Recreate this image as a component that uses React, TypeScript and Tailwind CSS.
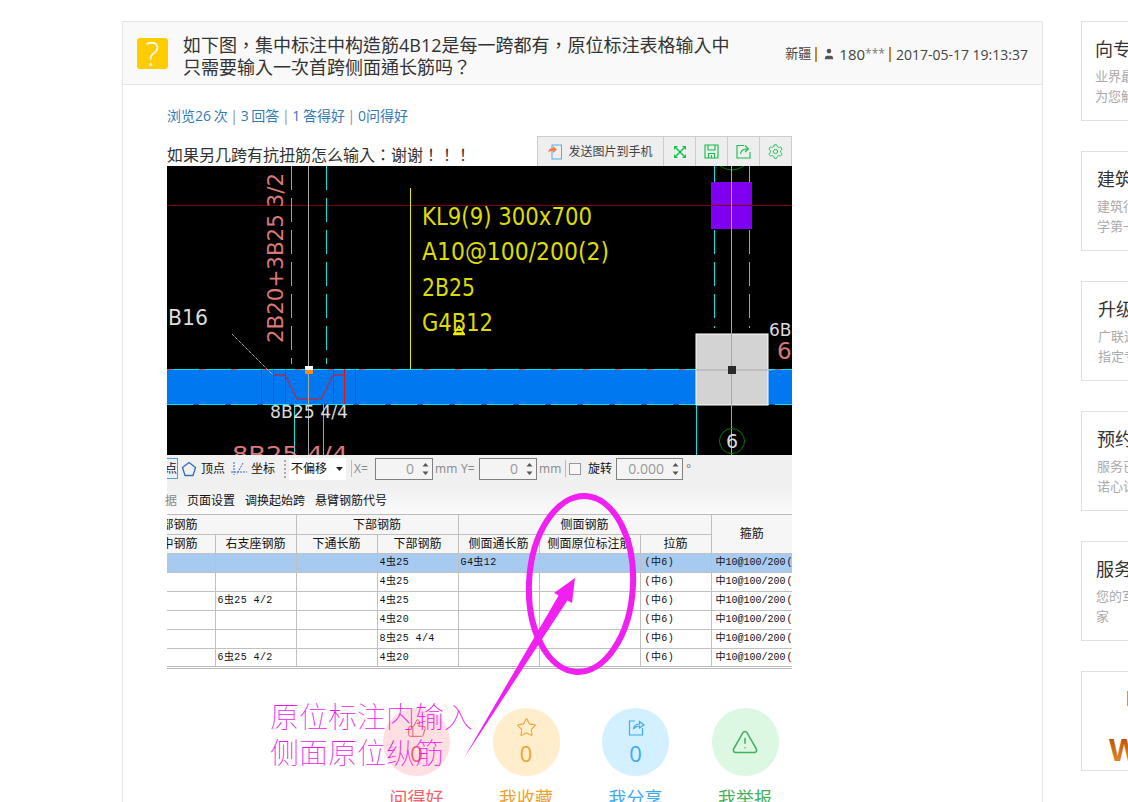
import React from 'react';
import { Settings, Star, ThumbsUp, TriangleAlert, User } from 'lucide-react';

const sideCards = [
  { title: '向专家提问', lines: ['业界最权威的专家', '为您解答疑难问题'], pad: 'pl-[13px]' },
  { title: '建筑课堂', lines: ['建筑行业在线学习', '学第一手专业知识'], pad: 'pl-[15px]' },
  { title: '升级服务', lines: ['广联达服务新升级', '指定专家一对一'], pad: 'pl-[16px]' },
  { title: '预约服务', lines: ['服务已全面升级', '诺心试用新体验'], pad: 'pl-[15px]' },
  { title: '服务热线', lines: ['您的军师智囊专', '家'], pad: 'pl-[14px]' },
];

const rows = [
  { right: '', bottom: '4虫25', side: 'G4虫12', active: true },
  { right: '', bottom: '4虫25', side: '' },
  { right: '6虫25 4/2', bottom: '4虫25', side: '' },
  { right: '', bottom: '4虫20', side: '' },
  { right: '', bottom: '8虫25 4/4', side: '' },
  { right: '6虫25 4/2', bottom: '4虫20', side: '' },
];

const actions = [
  { label: '问得好', count: '0', circle: 'bg-[#ffdfe1]', text: 'text-[#f0606a]', icon: <ThumbsUp size={20} strokeWidth={1.2} /> },
  { label: '我收藏', count: '0', circle: 'bg-[#ffedcb]', text: 'text-[#eba42f]', icon: <Star size={21} strokeWidth={1.2} /> },
  {
    label: '我分享',
    count: '0',
    circle: 'bg-[#d2f0ff]',
    text: 'text-[#3fa9f0]',
    icon: (
      <svg width="20" height="20" viewBox="0 0 20 20" fill="none" stroke="currentColor" strokeWidth="1.2">
        <path d="M9 3H3.500v14h13v-7" />
        <path d="M7.500 11c.5-3.500 3-5 6-5V3.500L18 7l-4.500 3V8c-2.500 0-4.500 1-6 3z" />
      </svg>
    ),
  },
  { label: '我举报', count: '', circle: 'bg-[#dcf7e2]', text: 'text-[#45b060]', icon: <TriangleAlert size={28} strokeWidth={1.3} /> },
];

const Spin = () => (
  <svg width="7" height="14" viewBox="0 0 7 14" className="fill-[#555]">
    <path d="M3.500 1 6.500 4.500h-6zM3.500 13 .5 9.500h6z" />
  </svg>
);

const NumBox = ({ value, width }: { value: string; width: string }) => (
  <div className={`${width} h-[22px] border border-[#808080] bg-[#f4f4f4] flex items-center justify-end gap-[8px] pr-[3px] text-[14px] text-[#999]`}>
    <span>{value}</span>
    <Spin />
  </div>
);

const ToolBtn = ({ children }: { children: React.ReactNode }) => (
  <div className="w-[32px] h-full flex items-center justify-center border-l border-[#ccc]">{children}</div>
);

const CadDrawing = () => (
  <svg width="625" height="289" viewBox="0 0 625 289" className="block bg-black font-['DejaVu_Sans',sans-serif]">
    <rect x="0" y="203" width="625" height="35" fill="#0078f0" />
    <line x1="0" y1="39.500" x2="625" y2="39.500" stroke="#800000" />
    <line x1="124.500" y1="0" x2="124.500" y2="198" stroke="#00e8e8" strokeWidth="1" strokeDasharray="24 8" />
    <line x1="159.500" y1="0" x2="159.500" y2="198" stroke="#00e8e8" strokeWidth="1" strokeDasharray="24 8" />
    <line x1="547.500" y1="0" x2="547.500" y2="162" stroke="#00e8e8" strokeDasharray="24 8" />
    <line x1="582.500" y1="0" x2="582.500" y2="162" stroke="#00e8e8" strokeDasharray="24 8" />
    <line x1="243.500" y1="22" x2="243.500" y2="203" stroke="#e8e800" />
    <rect x="544" y="16" width="41" height="47" fill="#7f00f0" />
    <line x1="544" y1="39.500" x2="585" y2="39.500" stroke="#800000" />
    <path d="M553 0q12 8 24 0" fill="none" stroke="#008000" />

    <line x1="0" y1="203.500" x2="625" y2="203.500" stroke="#00e8e8" />
    <line x1="0" y1="203.500" x2="625" y2="203.500" stroke="#b06060" strokeDasharray="6 26" />
    <line x1="0" y1="238.500" x2="625" y2="238.500" stroke="#0058b0" />
    <line x1="0" y1="238.500" x2="625" y2="238.500" stroke="#00e8e8" strokeDasharray="26 6" />
    <line x1="65" y1="168" x2="106" y2="209" stroke="#fff" strokeDasharray="1 1" />
    <g stroke="#f01010" fill="none">
      <path d="M94.500 203v35M106.500 203v35M118.500 203v35M166.500 203v35M177.500 203v35M188.500 203v35" />
      <path d="M106 209h12l12 24h24l12-24h11" />
    </g>

    <rect x="529" y="168" width="72" height="71" fill="#d3d3d3" stroke="#fff" />
    <line x1="529" y1="204" x2="605" y2="204" stroke="#a8a8a8" />
    <line x1="141.500" y1="0" x2="141.500" y2="289" stroke="#a8a8a8" />
    <line x1="564.500" y1="0" x2="564.500" y2="289" stroke="#a8a8a8" />
    <rect x="561" y="200" width="8" height="8" fill="#2a2a2a" />
    <rect x="138" y="200" width="8" height="4" fill="#fff" />
    <rect x="138" y="204" width="8" height="4" fill="#f58a1f" />

    <line x1="127.500" y1="238" x2="127.500" y2="289" stroke="#00e8e8" />
    <line x1="156.500" y1="238" x2="156.500" y2="289" stroke="#00e8e8" />
    <line x1="529.500" y1="239" x2="529.500" y2="289" stroke="#00e8e8" />
    <line x1="564.500" y1="239" x2="564.500" y2="262" stroke="#00e8e8" />
    <circle cx="565" cy="275" r="12.500" fill="none" stroke="#008000" />

    <text x="0" y="0" transform="translate(116 177) rotate(-90)" fontSize="22" fill="#d97878" textLength="170" lengthAdjust="spacingAndGlyphs">2B20+3B25 3/2</text>
    <text x="1" y="159" fontSize="22" fill="#dcdcdc" textLength="40" lengthAdjust="spacingAndGlyphs">B16</text>
    <text x="103" y="252" fontSize="18" fill="#dcdcdc" textLength="78" lengthAdjust="spacingAndGlyphs">8B25 4/4</text>
    <text x="65" y="296" fontSize="22" fill="#d97878" textLength="116" lengthAdjust="spacingAndGlyphs">8B25 4/4</text>
    <text x="255" y="59" fontSize="24" fill="#dcdc00" textLength="170" lengthAdjust="spacingAndGlyphs">KL9(9) 300x700</text>
    <text x="255" y="94" fontSize="24" fill="#dcdc00" textLength="187" lengthAdjust="spacingAndGlyphs">A10@100/200(2)</text>
    <text x="255" y="130" fontSize="24" fill="#dcdc00" textLength="53" lengthAdjust="spacingAndGlyphs">2B25</text>
    <text x="255" y="165" fontSize="24" fill="#dcdc00" textLength="71" lengthAdjust="spacingAndGlyphs">G4B12</text>
    <path d="M292 160l-4.500 7h9zM286 168.500h12" fill="none" stroke="#f0f000" strokeWidth="1.500" />
    <text x="602" y="170" fontSize="17" fill="#dcdcdc">6B</text>
    <text x="610" y="193" fontSize="23" fill="#d97878">6</text>
    <text x="565" y="282" fontSize="19" fill="#dcdcdc" textAnchor="middle">6</text>
  </svg>
);

const CadToolbar = () => (
  <div className="h-[33px] bg-[#f0f0f0] flex items-start pt-[3px] whitespace-nowrap text-[12px] leading-[22px] text-[#111] overflow-hidden">
    <div className="w-[11px] h-[21px] border border-l-0 border-[#5b9bd5] bg-[#e8f2fb] flex items-center justify-end overflow-hidden text-[12px]">点</div>
    <svg width="16" height="16" viewBox="0 0 16 16" className="ml-[3px] mt-[3px] fill-none stroke-[#2f6fc0]" strokeWidth="1.300">
      <path d="M8 1.500 14.500 6.500 12 14.500H4L1.500 6.500z" />
    </svg>
    <span className="ml-[4px]">顶点</span>
    <svg width="18" height="16" viewBox="0 0 18 16" className="ml-[5px] mt-[3px] fill-none stroke-[#2f6fc0]" strokeDasharray="2 1">
      <path d="M4 1v13M1 11h16M13 2 7 13" />
    </svg>
    <span className="ml-[3px]">坐标</span>
    <div className="ml-[9px] mt-[2px] w-[2px] h-[18px] border-l-2 border-dotted border-[#aaa]" />
    <div className="ml-[3px] w-[57px] h-[22px] bg-white flex items-center justify-between pl-[2px] pr-[3px]">
      <span>不偏移</span>
      <svg width="7" height="4" viewBox="0 0 7 4" className="fill-[#222]"><path d="M0 0h7L3.500 4z" /></svg>
    </div>
    <div className="ml-[5px] mt-[2px] w-px h-[17px] bg-[#bbb]" />
    <span className="ml-[2px] w-[21px] text-[#888]">X=</span>
    <NumBox value="0" width="w-[58px]" />
    <span className="ml-[2px] w-[26px] text-[#888]">mm</span>
    <span className="w-[18px] text-[#888]">Y=</span>
    <NumBox value="0" width="w-[58px]" />
    <span className="ml-[2px] w-[26px] text-[#888]">mm</span>
    <div className="mt-[2px] w-px h-[17px] bg-[#bbb]" />
    <div className="ml-[3px] mt-[5px] w-[12px] h-[12px] border border-[#999] bg-[#f6f6f6]" />
    <span className="ml-[7px]">旋转</span>
    <div className="ml-[4px]"><NumBox value="0.000" width="w-[67px]" /></div>
    <span className="ml-[3px] text-[#777]">°</span>
  </div>
);

const BarTable = () => (
  <table className="w-[625px] table-fixed border-collapse text-[12px] leading-none text-[#111] border-b-[3px] border-double border-[#bbb]">
    <colgroup>
      <col className="w-[48px]" />
      <col className="w-[81px]" />
      <col className="w-[81px]" />
      <col className="w-[81px]" />
      <col className="w-[81px]" />
      <col className="w-[101px]" />
      <col className="w-[71px]" />
      <col className="w-[81px]" />
    </colgroup>
    <thead>
      <tr className="h-[19px] bg-[#f6f6f6]">
        <th colSpan={2} className="border-r border-b border-[#c0c0c0] font-normal p-0 pt-px overflow-hidden">
          <div className="flex justify-end pr-[98px] whitespace-nowrap">上部钢筋</div>
        </th>
        <th colSpan={2} className="border-x border-b border-[#c0c0c0] font-normal p-0 pt-px">下部钢筋</th>
        <th colSpan={3} className="border-x border-b border-[#c0c0c0] font-normal p-0 pt-px">侧面钢筋</th>
        <th rowSpan={2} className="border-l border-b border-[#c0c0c0] font-normal p-0">箍筋</th>
      </tr>
      <tr className="h-[19px] bg-[#f6f6f6]">
        <th className="border-r border-b border-[#c0c0c0] font-normal p-0 pt-px overflow-hidden">
          <div className="flex justify-end pr-[17px] whitespace-nowrap">跨中钢筋</div>
        </th>
        {['右支座钢筋', '下通长筋', '下部钢筋', '侧面通长筋', '侧面原位标注筋', '拉筋'].map((h) => (
          <th key={h} className="border-x border-b border-[#c0c0c0] font-normal p-0 pt-px whitespace-nowrap overflow-hidden">{h}</th>
        ))}
      </tr>
    </thead>
    <tbody className="font-['Liberation_Mono','Noto_Sans_CJK_SC',monospace] text-[10px] tracking-[0.4px]">
      {rows.map((r, i) => (
        <tr key={i} className={`h-[19px] ${r.active ? 'bg-[#a6caf0]' : 'bg-white'}`}>
          <td className="border-r border-b border-[#c0c0c0] p-0" />
          <td className="border-x border-b border-[#c0c0c0] pl-[2px] pr-0 py-0 pt-px whitespace-pre">{r.right}</td>
          <td className="border-x border-b border-[#c0c0c0] p-0" />
          <td className="border-x border-b border-[#c0c0c0] pl-[2px] pr-0 py-0 pt-px whitespace-pre">{r.bottom}</td>
          <td className="border-x border-b border-[#c0c0c0] pl-[2px] pr-0 py-0 pt-px whitespace-pre">{r.side}</td>
          <td className="border-x border-b border-[#c0c0c0] p-0" />
          <td className="border-x border-b border-[#c0c0c0] pl-[4px] pr-0 py-0 pt-px whitespace-pre">(中6)</td>
          <td className="border-l border-b border-[#c0c0c0] pl-[4px] pr-0 py-0 pt-px whitespace-nowrap overflow-hidden tracking-normal">
            中10@100/200<span className="ml-px">(2)</span>
          </td>
        </tr>
      ))}
    </tbody>
  </table>
);

const Annotation = () => (
  <>
    <svg width="130" height="280" viewBox="0 0 130 280" className="absolute left-[290px] top-[325px] overflow-visible pointer-events-none">
      {/* ellipse and arrow drawn over the table */}
      <ellipse cx="124" cy="93" rx="52" ry="88" fill="none" stroke="#f020f0" strokeWidth="6" transform="rotate(3 124 93)" />
      <polygon points="118,87 115,112 110.400,109.400 7,267 101.600,104.600 97,102" fill="#f020f0" />
    </svg>
    <div className="absolute left-[103px] top-[533px] text-[29px] leading-[36px] font-thin text-[#ee14ee] whitespace-nowrap pointer-events-none">
      <div>原位标注内输入</div>
      <div>侧面原位纵筋</div>
    </div>
  </>
);

export default function App() {
  return (
    <div className="relative w-[1128px] h-[802px] overflow-hidden bg-white flex items-start gap-[38px] pl-[122px] pt-[21px] font-['Open_Sans','Noto_Sans_CJK_SC',sans-serif] text-[#333]">
      <main className="w-[921px] h-[900px] shrink-0 border border-[#e5e5e5]">
        <header className="h-[63px] bg-[#f9f9f9] border-b border-[#e5e5e5] flex items-center pl-[14px] pr-[14px]">
          <div className="w-[31px] h-[31px] rounded-[3px] bg-[#ffcc00] text-white text-[33px] font-light leading-[31px] text-center shrink-0">?</div>
          <h1 className="ml-[15px] mt-[5px] w-[560px] text-[18px] leading-[22px] font-normal text-[#333] font-['Open_Sans','Noto_Sans_CJK_TC',sans-serif]">
            如下图，集中标注中构造筋4B12是每一跨都有，原位标注表格输入中只需要输入一次首跨侧面通长筋吗？
          </h1>
          <div className="ml-auto mt-[2px] flex items-center whitespace-nowrap text-[14px] text-[#444]">
            <span className="text-[13px]">新疆</span>
            <span className="ml-[4px] w-[2px] h-[15px] bg-[#c8883a]" />
            <User size={14} strokeWidth={0} className="ml-[5px] fill-[#555]" />
            <span className="ml-[3px] text-[15px]">180</span>
            <span className="text-[12px] text-[#777]">***</span>
            <span className="ml-[4px] mr-[5px] w-[2px] h-[15px] bg-[#c8883a]" />
            <span>2017-05-17 19:13:37</span>
          </div>
        </header>

        <section className="pl-[44px] pt-[21px]">
          <p className="h-[20px] text-[14px] leading-[20px] text-[#337ab7] whitespace-pre [word-spacing:-1px]">
            浏览26 次 <span className="text-[#8a8ab0]">|</span> 3 回答 <span className="text-[#8a8ab0]">|</span> 1 答得好 <span className="text-[#8a8ab0]">|</span> 0问得好
          </p>
          <p className="mt-[19px] h-[21px] text-[16px] leading-[20px] whitespace-nowrap font-['Open_Sans','Noto_Sans_CJK_TC',sans-serif]">如果另几跨有抗扭筋怎么输入：谢谢！！！</p>

          <div className="relative w-[625px]">
            <div className="absolute right-0 top-[-30px] h-[30px] flex items-center bg-[#eeeeee] border border-[#ccc] border-b-0 text-[12px] text-[#444]">
              <div className="w-[125px] h-full flex items-center justify-center gap-[6px]">
                <svg width="14" height="16" viewBox="0 0 14 16" fill="none">
                  <rect x="4" y="1" width="9.500" height="14" stroke="#4fb0f0" />
                  <path d="M0 8q1-4 5-4V2l4 3.500L5 9V7q-3 0-5 1z" fill="#f97b45" />
                </svg>
                <span>发送图片到手机</span>
              </div>
              <ToolBtn>
                <svg width="14" height="14" viewBox="0 0 14 14" className="fill-[#13c04a]">
                  <path d="M1 1h4L1 5zM13 1v4L9 1zM1 13V9l4 4zM13 13H9l4-4z" />
                  <path d="M3 3l8 8M11 3l-8 8" stroke="#13c04a" strokeWidth="1.500" />
                </svg>
              </ToolBtn>
              <ToolBtn>
                <svg width="15" height="15" viewBox="0 0 15 15" fill="none" stroke="#13c04a" strokeWidth="1.100">
                  <path d="M1 1h13v13H1zM4 1v5h7V1M4.500 14V9.500h6V14M7.500 11v3" />
                </svg>
              </ToolBtn>
              <ToolBtn>
                <svg width="15" height="15" viewBox="0 0 15 15" fill="none" stroke="#13c04a" strokeWidth="1.100">
                  <path d="M8 1.500H1v12.500h13V8" />
                  <path d="M4.500 10c.5-3.500 3-5 6.500-5M9 1.500l3.500 3.500L9 8" />
                </svg>
              </ToolBtn>
              <ToolBtn><Settings size={17} strokeWidth={1.300} className="text-[#13c04a]" /></ToolBtn>
            </div>

            <CadDrawing />
            <CadToolbar />
            <div className="h-[27px] bg-gradient-to-b from-[#f0f0f0] to-[#fbfbfb] border-b border-[#bbb] flex items-center gap-[10px] text-[12px] text-[#111] whitespace-nowrap">
              <span className="ml-[-2px] text-[#888]">据</span>
              <span>页面设置</span>
              <span>调换起始跨</span>
              <span>悬臂钢筋代号</span>
            </div>
            <BarTable />
            <Annotation />

            <div className="mt-[39px] ml-[216px] flex gap-[42.500px]">
              {actions.map((a) => (
                <div key={a.label} className={`w-[67px] flex flex-col items-center whitespace-nowrap ${a.text}`}>
                  <div className={`w-[67px] h-[68px] rounded-full flex flex-col items-center justify-center gap-[2px] ${a.circle}`}>
                    {a.icon}
                    {a.count && <span className="text-[22px] leading-[26px]">{a.count}</span>}
                  </div>
                  <span className="mt-[10px] text-[18px] leading-[24px]">{a.label}</span>
                </div>
              ))}
            </div>
          </div>
        </section>
      </main>

      <aside className="w-[220px] shrink-0 flex flex-col gap-[30px]">
        {sideCards.map((c) => (
          <div key={c.title} className={`h-[100px] border border-[#e0e0e0] pt-[14px] ${c.pad}`}>
            <h3 className="text-[18px] leading-[26px] font-normal text-[#333] whitespace-nowrap">{c.title}</h3>
            {c.lines.map((l) => (
              <p key={l} className="text-[13px] leading-[20px] text-[#aaa] whitespace-nowrap first-of-type:mt-[4px]">{l}</p>
            ))}
          </div>
        ))}
        <div className="h-[100px] border border-[#e0e0e0]">
          <svg width="218" height="98" viewBox="0 0 218 98">
            <defs>
              <linearGradient id="logoFill" x1="0" y1="0" x2="0" y2="1">
                <stop offset="0" stopColor="#b04a00" />
                <stop offset="1" stopColor="#f09030" />
              </linearGradient>
            </defs>
            <rect x="45" y="19" width="3" height="15" fill="#e8902a" />
            <text x="27" y="89" fontSize="32" fontWeight="700" fill="url(#logoFill)" fontFamily="Liberation Sans, sans-serif">W</text>
          </svg>
        </div>
      </aside>
    </div>
  );
}
